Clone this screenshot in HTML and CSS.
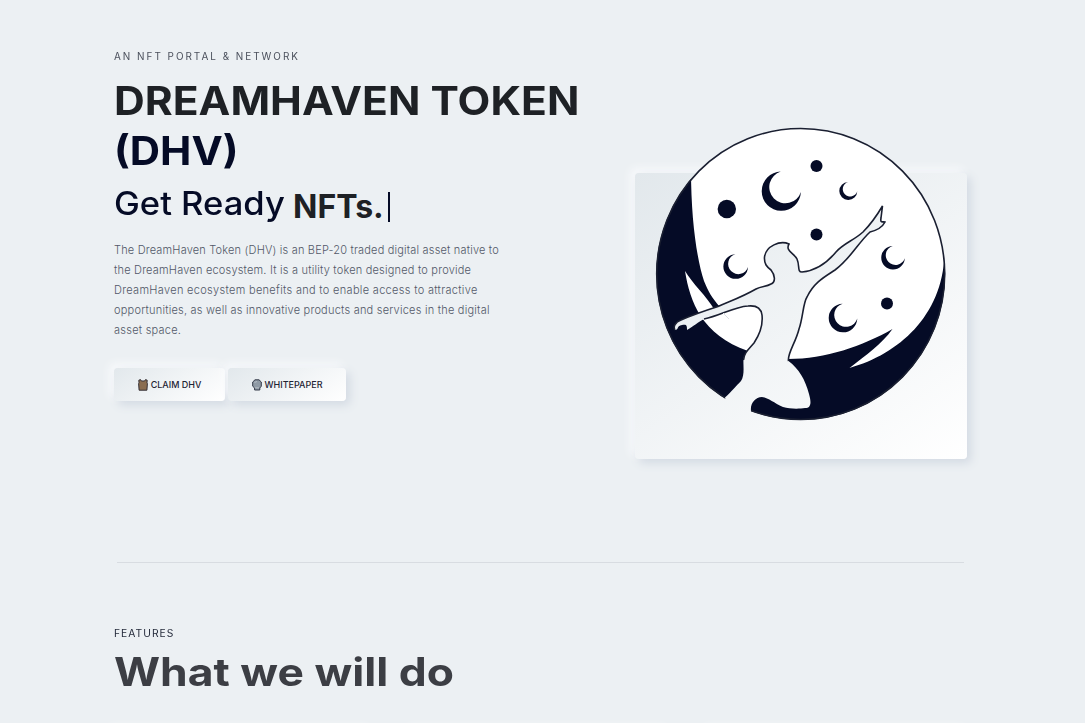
FILE: index.html
```html
<!DOCTYPE html>
<html lang="en">
<head>
<meta charset="utf-8">
<title>DreamHaven Token</title>
<link rel="stylesheet" href="styles.css">
</head>
<body>
<main class="page">
  <section class="hero">
    <div class="intro">
      <p class="eyebrow"><span class="fit fit-eyebrow">AN NFT PORTAL &amp; NETWORK</span></p>
      <h1 class="title"><span class="fit fit-title">DREAMHAVEN TOKEN</span><br><span class="fit fit-dhv accent">(DHV)</span></h1>
      <h2 class="ready"><span class="fit fit-ready">Get Ready</span><span class="typed"><span class="fit fit-nfts">NFTs.</span></span><i class="caret"></i></h2>
      <p class="copy">
        <span class="l1">The DreamHaven Token (DHV) is an BEP-20 traded digital asset native to</span>
        <span class="l2">the DreamHaven ecosystem. It is a utility token designed to provide</span>
        <span class="l3">DreamHaven ecosystem benefits and to enable access to attractive</span>
        <span class="l4">opportunities, as well as innovative products and services in the digital</span>
        <span class="l5">asset space.</span>
      </p>
      <div class="actions">
        <a class="btn claim"><svg width="10" height="12" viewBox="0 0 10 12"><path d="M.8 1.2 2.5.6 3.4 2h3.2L7.5.6l1.7.6-.2 2.6.4.8-.5 6.6H1.1L.6 4.6 1 3.8z" fill="#8a6d50" stroke="#343036"/></svg><span>CLAIM DHV</span></a>
        <a class="btn paper"><svg width="10" height="12" viewBox="0 0 10 12"><path d="M3 .8h4L9.3 3v4.2L7.8 9v2H2.6V9L.7 7.2V3z" fill="#8f9aa5" stroke="#343a49"/><path d="M2.500 3.500 5 2.500M3 8.800h4" stroke="#b4bcc4" fill="none"/></svg><span>WHITEPAPER</span></a>
      </div>
    </div>
    <div class="art">
      <svg class="logo" width="300" height="306" viewBox="650 120 300 306">
        <defs>
          <path id="figure" d="M789 244C780 240 766 246 764.500 257C764 264 767 267 771 270C775 275 776 282 771 284C766 287 762 286 756 289C742 297 733 300 718 306.500C704 311 690 316 681 320C675 322 673 327 675 330C679 330 676 326 682 325C687 324 687 326 687 330C694 326 698 322 704 319C720 316 733 307 748 306C757 305 761 308 762 315C763 324 760 334 754 343C748 350 744 353 743.500 360C743 365 745 375 741 381C736 386 732 391 725 397.500L732 426H749L751 411C750 404 755 397 762 397C769 398 774 403 783 407C790 409 799 409 805 408C812 408 811 401 809 394C805 379 799 369 788.500 361C787 354 796 342 799 329C803 318 803 303 807 297C814 282 826 276 835 270C851 258 858 243 870 232C878 230 883 226 885 222C883 221 880 224 881 218L882.500 206C876 217 871 224 863 232C853 241 844 243 836 252C826 264 814 271 802 272C797 272 800 266 797 259C794 253 785 251 789 244Z"/>
          <path id="moon" d="M-.5-19.600A19.600 19.600 0 1 0 19.600 .8A16.200 16.200 0 1 1-.5-19.600Z"/>
          <mask id="cut" maskUnits="userSpaceOnUse" x="650" y="120" width="300" height="306"><path fill="#fff" d="M650 120h300v306H650z"/><use href="#figure" fill="#000"/></mask>
          <clipPath id="disc"><ellipse cx="800.700" cy="274" rx="144.500" ry="146"/></clipPath>
        </defs>
        <g mask="url(#cut)">
          <ellipse cx="800.700" cy="274" rx="144" ry="145.500" fill="#fff"/>
          <g clip-path="url(#disc)" fill="#050b26">
            <path d="M691 170C691 220 697 260 704 281C708 291 712 298 720 307L714 309C707 297 692 283 685 271C690 302 702 335 748 351V430H650V170Z"/>
            <path d="M740 359H788.500C825 359 863 346 892.500 329C882 344 866 355 849.500 368C899 354 942 316 944.500 255H955V430H740Z"/>
          </g>
          <ellipse cx="800.700" cy="274" rx="144" ry="145.500" fill="none" stroke="#1a1f31" stroke-width="1.600"/>
        </g>
        <path d="M788.500 361C787 354 796 342 799 329C803 318 803 303 807 297C814 282 826 276 835 270C851 258 858 243 870 232C878 230 883 226 885 222C883 221 880 224 881 218L882.500 206C876 217 871 224 863 232C853 241 844 243 836 252C826 264 814 271 802 272C797 272 800 266 797 259C794 253 785 251 789 244C780 240 766 246 764.500 257C764 264 767 267 771 270C775 275 776 282 771 284C766 287 762 286 756 289C742 297 733 300 718 306.500C704 311 690 316 681 320C675 322 673 327 675 330M704 319C720 316 733 307 748 306C757 305 761 308 762 315C763 324 760 334 754 343C748 350 744 353 743.500 360" fill="none" stroke="#1a1f31" stroke-width="1.600"/>
        <path d="M723 313L729 319" stroke="#dce0e5"/>
        <g fill="#050b26">
          <use href="#moon" transform="translate(781.300 191.200)"/>
          <use href="#moon" transform="translate(848.300 191) scale(.46)"/>
          <use href="#moon" transform="translate(735.700 266.500) scale(.63)"/>
          <use href="#moon" transform="translate(893 257.700) scale(.6)"/>
          <use href="#moon" transform="translate(843 318) scale(.73)"/>
          <circle cx="726.800" cy="209" r="9.200"/><circle cx="816.500" cy="166" r="6"/><circle cx="816.500" cy="234.500" r="6"/><circle cx="887" cy="303.500" r="6"/>
        </g>
      </svg>
    </div>
  </section>
  <hr class="rule">
  <section class="features">
    <p class="eyebrow dark"><span class="fit fit-features">FEATURES</span></p>
    <h2 class="heading"><span class="fit fit-heading">What we will do</span></h2>
    <div class="cards"><div class="card"></div><div class="card"></div><div class="card"></div></div>
  </section>
</main>
</body>
</html>
```
FILE: styles.css
```css
* { box-sizing: border-box; }
body { margin: 0; height: 723px; overflow: hidden; background: #ecf0f3; font-family: Inter, sans-serif; }
p, h1, h2 { margin: 0; }
.page { width: 1085px; height: 723px; padding: 46px 118px 0 114px; overflow: hidden; }
.hero { display: flex; justify-content: space-between; height: 516px; }
.intro { width: 500px; }
.fit { display: inline-block; transform-origin: left center; white-space: nowrap; }
.fit-title { transform: scaleX(1.092); }
.fit-dhv { transform: scaleX(1.075); }
.fit-ready { width: 179px; transform: scaleX(1.08); }
.fit-nfts { width: 95px; }
.fit-heading { transform: scaleX(1.139); }
.fit-eyebrow { transform: scaleX(.993); }
.fit-features { transform: scaleX(1.03); }
.eyebrow { height: 20px; line-height: 21px; font-size: 10px; letter-spacing: 2px; color: #4b505c; }
.dark { color: #252b3b; letter-spacing: 1px; }
.title { margin-top: 10px; height: 100px; line-height: 50px; font-size: 39px; font-weight: 700; color: #1e2125; white-space: nowrap; }
.accent { color: #050b26; }
.ready { display: flex; height: 50px; line-height: 50px; padding-top: 3px; font-size: 32px; font-weight: 500; color: #050b26; }
.typed { font-weight: 700; color: #1e2125; line-height: 55px; }
.caret { width: 2px; height: 30px; margin-top: 13px; background: #050b26; }
.copy { display: flex; flex-direction: column; align-items: flex-start; margin-top: 14px; font-size: 11px; line-height: 20px; font-weight: 300; color: #525868; white-space: nowrap; }
.l1 { letter-spacing: .18px; }
.l2 { letter-spacing: .2px; }
.l3 { letter-spacing: .31px; }
.l4 { letter-spacing: .22px; }
.l5 { letter-spacing: .25px; }
.actions { display: flex; gap: 3px; margin-top: 28px; }
.btn { display: flex; align-items: center; justify-content: center; gap: 3px; height: 33px; border-radius: 4px; background: linear-gradient(145deg, #e2e8ec, #fff); box-shadow: 4px 4px 10px #d3dae3, -4px -4px 10px #fafbfd; font-size: 9px; font-weight: 500; color: #1f2434; white-space: nowrap; }
.claim { width: 111px; }
.paper { width: 118px; }
.art { display: flex; width: 332px; height: 286px; margin-top: 127px; border-radius: 4px; background: linear-gradient(145deg, #e2e8ec, #fff); box-shadow: 4px 4px 10px #d3dae3, -4px -4px 10px #fafbfd; }
.logo { flex: none; margin: -53px 0 0 15px; }
.rule { width: 847px; margin: 0 3px; border: 0; height: 1px; background: #d8dce1; }
.features { padding-top: 60px; }
.heading { margin-top: 4px; height: 50px; line-height: 50px; font-size: 39px; font-weight: 700; color: #3c3e44; }
.cards { display: flex; gap: 40px; margin-top: 35px; }
.card { flex: 1; height: 120px; background: #ecf0f3; box-shadow: 4px 4px 10px #d3dae3, -4px -4px 10px #fafbfd; }
```
